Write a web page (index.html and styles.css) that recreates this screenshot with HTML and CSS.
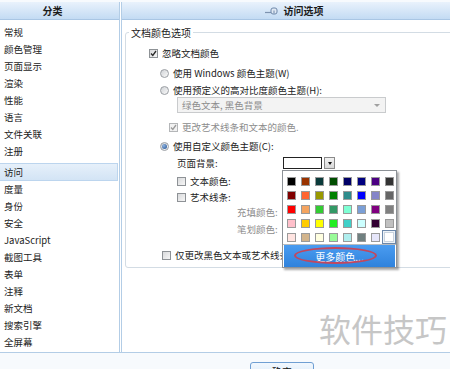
FILE: index.html
```html
<!DOCTYPE html>
<html lang="zh-CN">
<head>
    <meta charset="UTF-8">
    <title>访问选项</title>
    <link rel="stylesheet" href="styles.css">
</head>
<body>
<div class="window">

    <div class="main">
        <!-- Category list -->
        <div class="sidebar">
            <div class="side-head">分类</div>
            <ul class="cat-list">
                <li>常规</li>
                <li>颜色管理</li>
                <li>页面显示</li>
                <li>渲染</li>
                <li>性能</li>
                <li>语言</li>
                <li>文件关联</li>
                <li>注册</li>
                <li class="sel">访问</li>
                <li>度量</li>
                <li>身份</li>
                <li>安全</li>
                <li>JavaScript</li>
                <li>截图工具</li>
                <li>表单</li>
                <li>注释</li>
                <li>新文档</li>
                <li>搜索引擎</li>
                <li>全屏幕</li>
            </ul>
        </div>

        <!-- Options -->
        <div class="panel">
            <div class="panel-head">
                <svg class="head-icon" width="14" height="8" viewBox="0 0 14 8">
                    <path d="M0 5.5h6" stroke="#7d93b0" stroke-width="1.2"/>
                    <rect x="6" y="1" width="6" height="6" rx="2" fill="#dfe8f3" stroke="#6e88aa"/>
                    <path d="M9 3.5v3" stroke="#6e88aa"/>
                </svg>
                <span>访问选项</span>
            </div>

            <fieldset class="group">
                <legend>文档颜色选项</legend>

                <div class="opt opt-ignore">
                    <span class="cb"><svg width="7" height="7" viewBox="0 0 7 7"><path d="M1 3.5l1.8 2L6 1" fill="none" stroke="#2a2a2a" stroke-width="1.3"/></svg></span>
                    忽略文档颜色
                </div>
                <div class="opt opt-win"><span class="rb"></span>使用 Windows 颜色主题(W)</div>
                <div class="opt opt-contrast"><span class="rb"></span>使用预定义的高对比度颜色主题(H):</div>
                <div class="fake-select">
                    <span>绿色文本, 黑色背景</span>
                    <span class="sel-arrow"></span>
                </div>
                <div class="opt opt-art disabled">
                    <span class="cb"><svg width="7" height="7" viewBox="0 0 7 7"><path d="M1 3.5l1.8 2L6 1" fill="none" stroke="#9a9a9a" stroke-width="1.3"/></svg></span>
                    更改艺术线条和文本的颜色.
                </div>
                <div class="opt opt-custom"><span class="rb on"></span>使用自定义颜色主题(C):</div>
                <div class="opt opt-page">
                    <span class="page-label">页面背景:</span>
                    <span class="color-pick"><span class="pick-field"></span><span class="pick-arrow"></span></span>
                </div>
                <div class="opt opt-sub"><span class="cb"></span>文本颜色:</div>
                <div class="opt opt-sub opt-line"><span class="cb"></span>艺术线条:</div>
                <div class="opt opt-fill disabled">充填颜色:</div>
                <div class="opt opt-stroke disabled">笔划颜色:</div>
                <div class="opt opt-black"><span class="cb"></span>仅更改黑色文本或艺术线条的颜色</div>
            </fieldset>
        </div>
    </div>

    <div class="footer">
        <button class="btn">确定</button>
    </div>

    <!-- Colour dropdown, open over the options -->
    <div class="palette">
        <div class="swatches">
            <span class="cell"><i style="background:#000000"></i></span>
            <span class="cell"><i style="background:#993300"></i></span>
            <span class="cell"><i style="background:#0a3a3a"></i></span>
            <span class="cell"><i style="background:#004d00"></i></span>
            <span class="cell"><i style="background:#000066"></i></span>
            <span class="cell"><i style="background:#000080"></i></span>
            <span class="cell"><i style="background:#4b0082"></i></span>
            <span class="cell"><i style="background:#333333"></i></span>

            <span class="cell"><i style="background:#800000"></i></span>
            <span class="cell"><i style="background:#ff6633"></i></span>
            <span class="cell"><i style="background:#999900"></i></span>
            <span class="cell"><i style="background:#008000"></i></span>
            <span class="cell"><i style="background:#2e8b8b"></i></span>
            <span class="cell"><i style="background:#0000ff"></i></span>
            <span class="cell"><i style="background:#8585c8"></i></span>
            <span class="cell"><i style="background:#666666"></i></span>

            <span class="cell"><i style="background:#ff0000"></i></span>
            <span class="cell"><i style="background:#f4a460"></i></span>
            <span class="cell"><i style="background:#33cc33"></i></span>
            <span class="cell"><i style="background:#339966"></i></span>
            <span class="cell"><i style="background:#7fffd4"></i></span>
            <span class="cell"><i style="background:#7b9fd6"></i></span>
            <span class="cell"><i style="background:#800080"></i></span>
            <span class="cell"><i style="background:#808080"></i></span>

            <span class="cell"><i style="background:#ffc0cb"></i></span>
            <span class="cell"><i style="background:#ffcc00"></i></span>
            <span class="cell"><i style="background:#ffff00"></i></span>
            <span class="cell"><i style="background:#22ee22"></i></span>
            <span class="cell"><i style="background:#40d0c8"></i></span>
            <span class="cell"><i style="background:#ccffff"></i></span>
            <span class="cell"><i style="background:#330033"></i></span>
            <span class="cell"><i style="background:#c0c0c0"></i></span>

            <span class="cell"><i style="background:#ffe4e1"></i></span>
            <span class="cell"><i style="background:#d2b48c"></i></span>
            <span class="cell"><i style="background:#ffffe0"></i></span>
            <span class="cell"><i style="background:#98fb98"></i></span>
            <span class="cell"><i style="background:#afeeee"></i></span>
            <span class="cell"><i style="background:#708080"></i></span>
            <span class="cell"><i style="background:#e6e6fa"></i></span>
            <span class="cell current"><i style="background:#ffffff"></i></span>
        </div>
        <div class="more">
            更多颜色...
            <span class="circle"></span>
        </div>
    </div>

    <div class="watermark">软件技巧</div>
</div>
</body>
</html>
```

FILE: styles.css
```css
body {
    margin: 0;
    background: #fff;
    font-family: "Noto Sans CJK SC", "Liberation Sans", sans-serif;
    font-size: 9.5px;
    color: #222;
}

.window {
    position: relative;
    width: 450px;
    height: 369px;
    padding-top: 2px;
    box-sizing: border-box;
    overflow: hidden;
    background: #f7fafd;
}

.main {
    display: flex;
    height: 350px;
    border-bottom: 1px solid #b3cde6;
    background: #fff;
}

/* Sidebar */
.sidebar {
    width: 119px;
    border-right: 1px solid #b3cde6;
    flex-shrink: 0;
}

.side-head,
.panel-head {
    height: 18px;
    box-sizing: border-box;
    border-bottom: 1px solid #a9c6e4;
    background: linear-gradient(#e9f2fc, #c3dbf3);
    font-size: 10px;
    font-weight: bold;
    display: flex;
    align-items: center;
    justify-content: center;
    color: #1a1a1a;
}

.side-head {
    padding-right: 14px;
}

.cat-list {
    list-style: none;
    margin: 0;
    padding: 4px 0 0 0;
}

.cat-list li {
    height: 17px;
    line-height: 17px;
    padding-left: 4px;
}

.cat-list li.sel {
    margin-top: 3px;
    height: 18px;
    line-height: 16px;
    box-sizing: border-box;
    margin-right: 1px;
    border: 1px solid #bcd5ee;
    border-left: none;
    background: linear-gradient(#e6f0fa, #d3e4f5);
}

/* Options panel */
.panel {
    flex: 1;
    margin-left: 1px;
    border-left: 1px solid #b3cde6;
    overflow: hidden;
}

.panel-head {
    padding-left: 16px;
    gap: 5px;
}

.group {
    margin: 6px -20px 0 3px;
    padding: 0 0 5px 0;
    border: 1px solid #d3dce4;
    border-radius: 3px;
}

.group legend {
    margin-left: 3px;
    padding: 0 2px;
    line-height: 13px;
    font-size: 10px;
}

.opt {
    display: flex;
    align-items: center;
    gap: 4px;
    height: 14px;
    white-space: nowrap;
}

.disabled {
    color: #8c8c8c;
}

.opt-ignore { margin-top: 7px; padding-left: 23px; }
.opt-win { margin-top: 6px; padding-left: 34px; }
.opt-contrast { margin-top: 3px; padding-left: 34px; }
.opt-art { margin-top: 7px; padding-left: 43px; }
.opt-custom { margin-top: 5px; padding-left: 34px; }
.opt-page { margin-top: 3px; padding-left: 51px; gap: 0; }
.opt-sub { margin-top: 4px; padding-left: 51px; }
.opt-line { margin-top: 2px; }
.opt-fill { margin-top: 1px; padding-left: 111px; }
.opt-stroke { margin-top: 3px; padding-left: 111px; }
.opt-black { margin-top: 12px; padding-left: 36px; }

/* Check boxes and radios */
.cb,
.rb {
    width: 9px;
    height: 9px;
    box-sizing: border-box;
    border: 1px solid #8e9296;
    background: linear-gradient(135deg, #d9dadc, #f6f6f6);
    display: flex;
    align-items: center;
    justify-content: center;
    flex-shrink: 0;
}

.disabled .cb {
    border-color: #b4b6b8;
    background: #f1f1f1;
}

.rb {
    border-radius: 50%;
    border-color: #9a9ea3;
    background: linear-gradient(135deg, #cfd2d6, #fafafa);
}

.rb.on::after {
    content: "";
    width: 5px;
    height: 5px;
    border-radius: 50%;
    background: radial-gradient(circle at 35% 35%, #8fb3e0, #1f4f8f);
}

.fake-select {
    margin-left: 51px;
    width: 209px;
    height: 16px;
    box-sizing: border-box;
    border: 1px solid #c9cbcd;
    background: #f3f3f3;
    color: #8c8c8c;
    display: flex;
    align-items: center;
    justify-content: space-between;
    padding: 0 5px 0 4px;
}

.sel-arrow {
    width: 0;
    height: 0;
    border-left: 3px solid transparent;
    border-right: 3px solid transparent;
    border-top: 3px solid #a0a0a0;
}

.page-label {
    width: 106px;
}

.color-pick {
    display: flex;
    gap: 2px;
    height: 12px;
}

.pick-field {
    width: 39px;
    height: 12px;
    box-sizing: border-box;
    border: 1px solid #222;
    background: #fff;
}

.pick-arrow {
    width: 11px;
    height: 12px;
    box-sizing: border-box;
    border: 1px solid #8a8a8a;
    background: linear-gradient(#f2f2f2, #d8d8d8);
    display: flex;
    align-items: center;
    justify-content: center;
}

.pick-arrow::after {
    content: "";
    border-left: 2px solid transparent;
    border-right: 2px solid transparent;
    border-top: 3px solid #111;
}

/* Footer */
.footer {
    display: flex;
    justify-content: center;
    padding: 9px 0 0 114px;
}

.btn {
    width: 64px;
    height: 18px;
    padding: 2px 0 0 0;
    border: 1px solid #6f9fd3;
    border-radius: 3px;
    background: linear-gradient(#f2f8fe, #d9e9f8);
    font-family: inherit;
    font-size: 10px;
    color: #111;
    line-height: 14px;
}

/* Colour palette popup */
.palette {
    position: absolute;
    left: 282px;
    top: 170px;
    width: 115px;
    box-sizing: border-box;
    border: 1px solid #8d9297;
    background: #fff;
    box-shadow: 2px 2px 2px rgba(0, 0, 0, 0.35);
    padding: 3px 0 0 0;
}

.swatches {
    display: grid;
    grid-template-columns: repeat(8, 14px);
    grid-auto-rows: 14px;
    padding-left: 1px;
    border-bottom: 1px solid #b8bcc0;
}

.cell {
    display: flex;
    align-items: center;
    justify-content: center;
    box-sizing: border-box;
}

.cell i {
    width: 9px;
    height: 9px;
    box-sizing: border-box;
    border: 1px solid #9a9a9a;
}

.cell.current {
    border: 1px solid #6c88aa;
    background: #eef3f8;
}

.cell.current i {
    width: 10px;
    height: 10px;
    border-color: #c9d3de;
}

.more {
    position: relative;
    height: 22px;
    margin: 0 1px;
    background: linear-gradient(#4a9cf0, #2f82dc);
    color: #fff;
    font-size: 10px;
    display: flex;
    align-items: center;
    justify-content: center;
}

.circle {
    position: absolute;
    left: 10px;
    top: 2px;
    width: 83px;
    height: 17px;
    box-sizing: border-box;
    border: 2px solid #c2475e;
    border-radius: 50%;
}

.watermark {
    position: absolute;
    right: 3px;
    top: 308px;
    padding-left: 3px;
    background: #fff;
    font-size: 32px;
    line-height: 40px;
    color: #c6c6c6;
}
```
